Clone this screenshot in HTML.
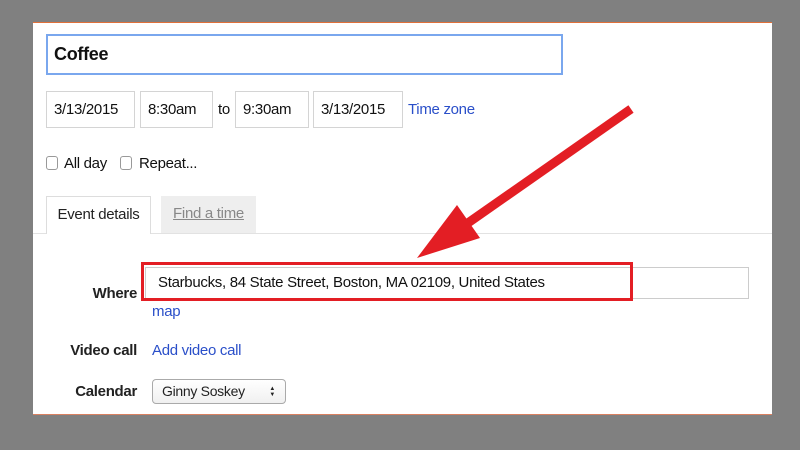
<!DOCTYPE html>
<html><head><style>
body{margin:0;width:800px;height:450px;background:#808080;position:relative;overflow:hidden;font-family:"Liberation Sans",Arial,sans-serif;}
.p{position:absolute;left:33px;top:22px;width:739px;height:391px;background:#fff;border-top:1px solid #e0703a;border-bottom:1px solid #d98060;}
.a{position:absolute;}
.box{position:absolute;border:1px solid #d4d4d4;box-sizing:border-box;font-size:15px;letter-spacing:-0.3px;color:#111;padding-left:7px;line-height:35px;}
.lnk{color:#2a4fc9;font-size:15px;letter-spacing:-0.3px;position:absolute;}
.t{font-size:15px;letter-spacing:-0.3px;}
.lbl{position:absolute;font-size:15px;letter-spacing:-0.3px;font-weight:bold;color:#222;text-align:right;width:120px;}
.cb{position:absolute;width:12px;height:14px;border:1px solid #999;border-radius:3px;top:156px;box-sizing:border-box;}
</style></head><body>
<div class="p"></div>
<div class="a" style="left:46px;top:34px;width:517px;height:41px;border:2px solid #7aa7ee;box-sizing:border-box;font-size:18px;letter-spacing:-0.3px;font-weight:bold;padding-left:6px;line-height:37px;color:#111">Coffee</div>
<div class="box" style="left:46px;top:91px;width:89px;height:37px">3/13/2015</div>
<div class="box" style="left:140px;top:91px;width:73px;height:37px">8:30am</div>
<div class="a t" style="left:218px;top:101px;color:#111">to</div>
<div class="box" style="left:235px;top:91px;width:74px;height:37px">9:30am</div>
<div class="box" style="left:313px;top:91px;width:90px;height:37px">3/13/2015</div>
<div class="lnk" style="left:408px;top:101px">Time zone</div>
<div class="cb" style="left:46px"></div>
<div class="a t" style="left:64px;top:155px;color:#111">All day</div>
<div class="cb" style="left:120px"></div>
<div class="a t" style="left:139px;top:155px;color:#111">Repeat...</div>
<div class="a" style="left:33px;top:233px;width:739px;height:1px;background:#e2e2e2"></div>
<div class="a t" style="left:46px;top:196px;width:105px;height:38px;border:1px solid #ddd;border-bottom:none;background:#fff;box-sizing:border-box;color:#222;text-align:center;line-height:36px">Event details</div>
<div class="a t" style="left:161px;top:196px;width:95px;height:37px;background:#eee;color:#888;text-align:center;line-height:36px;text-decoration:underline">Find a time</div>
<div class="lbl" style="left:17px;top:285px">Where</div>
<div class="box" style="left:145px;top:267px;width:604px;height:32px;line-height:30px;padding-left:12px;border-color:#ccc">Starbucks, 84 State Street, Boston, MA 02109, United States</div>
<div class="a" style="left:141px;top:262px;width:492px;height:39px;border:3px solid #e31e24;box-sizing:border-box"></div>
<div class="lnk" style="left:152px;top:303px">map</div>
<div class="lbl" style="left:17px;top:342px">Video call</div>
<div class="lnk" style="left:152px;top:342px">Add video call</div>
<div class="lbl" style="left:17px;top:383px">Calendar</div>
<div class="a" style="left:152px;top:379px;width:134px;height:25px;border:1px solid #aaa;border-radius:4px;box-sizing:border-box;font-size:14px;letter-spacing:-0.3px;line-height:23px;padding-left:9px;color:#222;background:linear-gradient(#fff,#f0f0f0)">Ginny Soskey<span style="position:absolute;right:10px;top:6px;font-size:6px;line-height:6px">&#9650;<br>&#9660;</span></div>
<svg class="a" style="left:0;top:0" width="800" height="450">
<line x1="631" y1="109" x2="455" y2="232" stroke="#e31e24" stroke-width="9"/>
<polygon points="417,258 457,205 480,238" fill="#e31e24"/>
</svg>
</body></html>
